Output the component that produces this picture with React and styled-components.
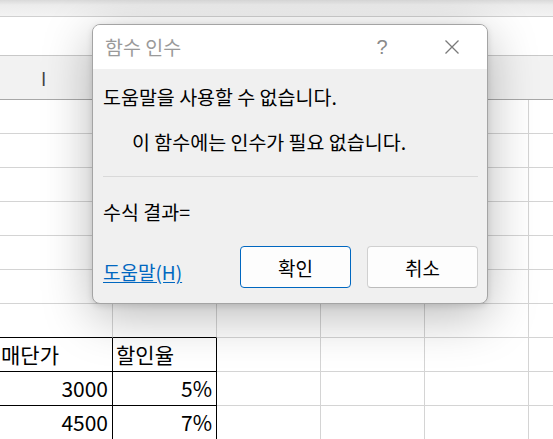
import React from "react";
import styled, { createGlobalStyle } from "styled-components";

const GlobalStyle = createGlobalStyle`
  html, body {
    margin: 0;
    padding: 0;
    background: #ffffff;
    font-family: "Noto Sans CJK KR", "Noto Sans", sans-serif;
  }
`;

const Page = styled.div`
  position: relative;
  width: 553px;
  height: 439px;
  overflow: hidden;
  background: #ffffff;
`;

const TopBand = styled.div`
  height: 16px;
  background: linear-gradient(#d9d9d9 0px, #ececec 5px, #f3f3f3 16px);
  border-bottom: 1px solid #d0d0d0;
`;

const Blank = styled.div`
  height: 38px;
  border-bottom: 1px solid #c8c8c8;
`;

const HeaderRow = styled.div`
  height: 43px;
  background: #f2f2f2;
  border-bottom: 1px solid #a8a8a8;
  display: flex;
  align-items: center;
  padding-left: 41px;
  color: #444;
  font-size: 18px;
`;

const Row = styled.div`
  display: flex;
  height: 34px;
`;

const Cell = styled.div`
  box-sizing: border-box;
  flex: 0 0 ${(p) => p.$w}px;
  height: 34px;
  border-right: 1px solid ${(p) => (p.$dark ? "#000" : "#d4d4d4")};
  border-bottom: 1px solid ${(p) => (p.$dark || p.$darkBottom ? "#000" : "#d4d4d4")};
  display: flex;
  align-items: center;
  justify-content: ${(p) => (p.$right ? "flex-end" : "flex-start")};
  padding: 0 4px 0 ${(p) => p.$pl ?? 3}px;
  font-size: 21px;
  line-height: 1;
  color: #000;
  white-space: nowrap;
`;

const Dialog = styled.div`
  position: absolute;
  left: 92px;
  top: 24px;
  width: 396px;
  height: 280px;
  box-sizing: border-box;
  border: 1px solid #a4a4a4;
  border-radius: 8px;
  background: #f0f0f0;
  box-shadow: 0 12px 50px rgba(0, 0, 0, 0.28), 0 2px 6px rgba(0, 0, 0, 0.12);
  overflow: hidden;
  display: flex;
  flex-direction: column;
`;

const TitleBar = styled.div`
  height: 44px;
  background: #ffffff;
  display: flex;
  align-items: center;
  padding-left: 12px;
  flex-shrink: 0;
`;

const Title = styled.div`
  flex: 1;
  font-size: 19.5px;
  color: #9a9a9a;
  line-height: 26px;
`;

const HelpMark = styled.div`
  width: 20px;
  text-align: center;
  font-family: "Liberation Sans", sans-serif;
  font-size: 20px;
  color: #8a8a8a;
  margin-right: 50px;
`;

const CloseBtn = styled.div`
  width: 20px;
  height: 20px;
  display: flex;
  align-items: center;
  justify-content: center;
  margin-right: 25px;
`;

const Body = styled.div`
  flex: 1;
  padding: 0 9px 0 10px;
  display: flex;
  flex-direction: column;
`;

const Message = styled.div`
  font-size: 19.5px;
  line-height: 24px;
  color: #000;
  margin-top: ${(p) => p.$mt}px;
  padding-left: ${(p) => p.$indent || 0}px;
`;

const Separator = styled.div`
  height: 1px;
  background: #d9d9d9;
  margin-top: 22px;
`;

const Footer = styled.div`
  display: flex;
  align-items: flex-end;
  margin-top: 22px;
`;

const HelpLink = styled.a`
  flex: 1;
  font-size: 19px;
  line-height: 24px;
  color: #0067c0;
  text-decoration: underline;
  text-underline-offset: 2px;
  margin-bottom: 4px;
  cursor: pointer;
`;

const Button = styled.button`
  width: 111px;
  height: 42px;
  box-sizing: border-box;
  margin-left: ${(p) => p.$ml || 0}px;
  background: #fdfdfd;
  border: 1px solid ${(p) => (p.$primary ? "#0067c0" : "#d0d0d0")};
  border-bottom-color: ${(p) => (p.$primary ? "#0067c0" : "#bcbcbc")};
  border-radius: 4px;
  font-family: "Noto Sans CJK KR", sans-serif;
  font-size: 19px;
  color: #000;
  padding: 0;
`;

const widths = [113, 104, 104, 104, 104, 60];

const emptyRows = 7;

const tableRows = [
  ["매단가", "할인율"],
  ["3000", "5%"],
  ["4500", "7%"],
];

export default function App() {
  return (
    <Page>
      <GlobalStyle />
      <TopBand />
      <Blank />
      <HeaderRow>I</HeaderRow>
      {Array.from({ length: emptyRows }).map((_, r) => (
        <Row key={r}>
          {widths.map((w, c) => (
            <Cell key={c} $w={w} $darkBottom={r === emptyRows - 1 && c < 2} />
          ))}
        </Row>
      ))}
      {tableRows.map((vals, r) => (
        <Row key={"t" + r}>
          {widths.map((w, c) => (
            <Cell
              key={c}
              $w={w}
              $dark={c < 2}
              $right={r > 0 && c < 2}
              $pl={c === 0 ? 1 : 3}
            >
              {c < 2 ? vals[c] : null}
            </Cell>
          ))}
        </Row>
      ))}

      <Dialog>
        <TitleBar>
          <Title>함수 인수</Title>
          <HelpMark>?</HelpMark>
          <CloseBtn>
            <svg width="16" height="16" viewBox="0 0 16 16">
              <path d="M1.5 1.5 L14.5 14.5 M14.5 1.5 L1.5 14.5" stroke="#7a7a7a" strokeWidth="1.3" fill="none" />
            </svg>
          </CloseBtn>
        </TitleBar>
        <Body>
          <Message $mt={16}>도움말을 사용할 수 없습니다.</Message>
          <Message $mt={21} $indent={29}>이 함수에는 인수가 필요 없습니다.</Message>
          <Separator />
          <Message $mt={23}>수식 결과=</Message>
          <Footer>
            <HelpLink>도움말(H)</HelpLink>
            <Button $primary>확인</Button>
            <Button $ml={16}>취소</Button>
          </Footer>
        </Body>
      </Dialog>
    </Page>
  );
}
